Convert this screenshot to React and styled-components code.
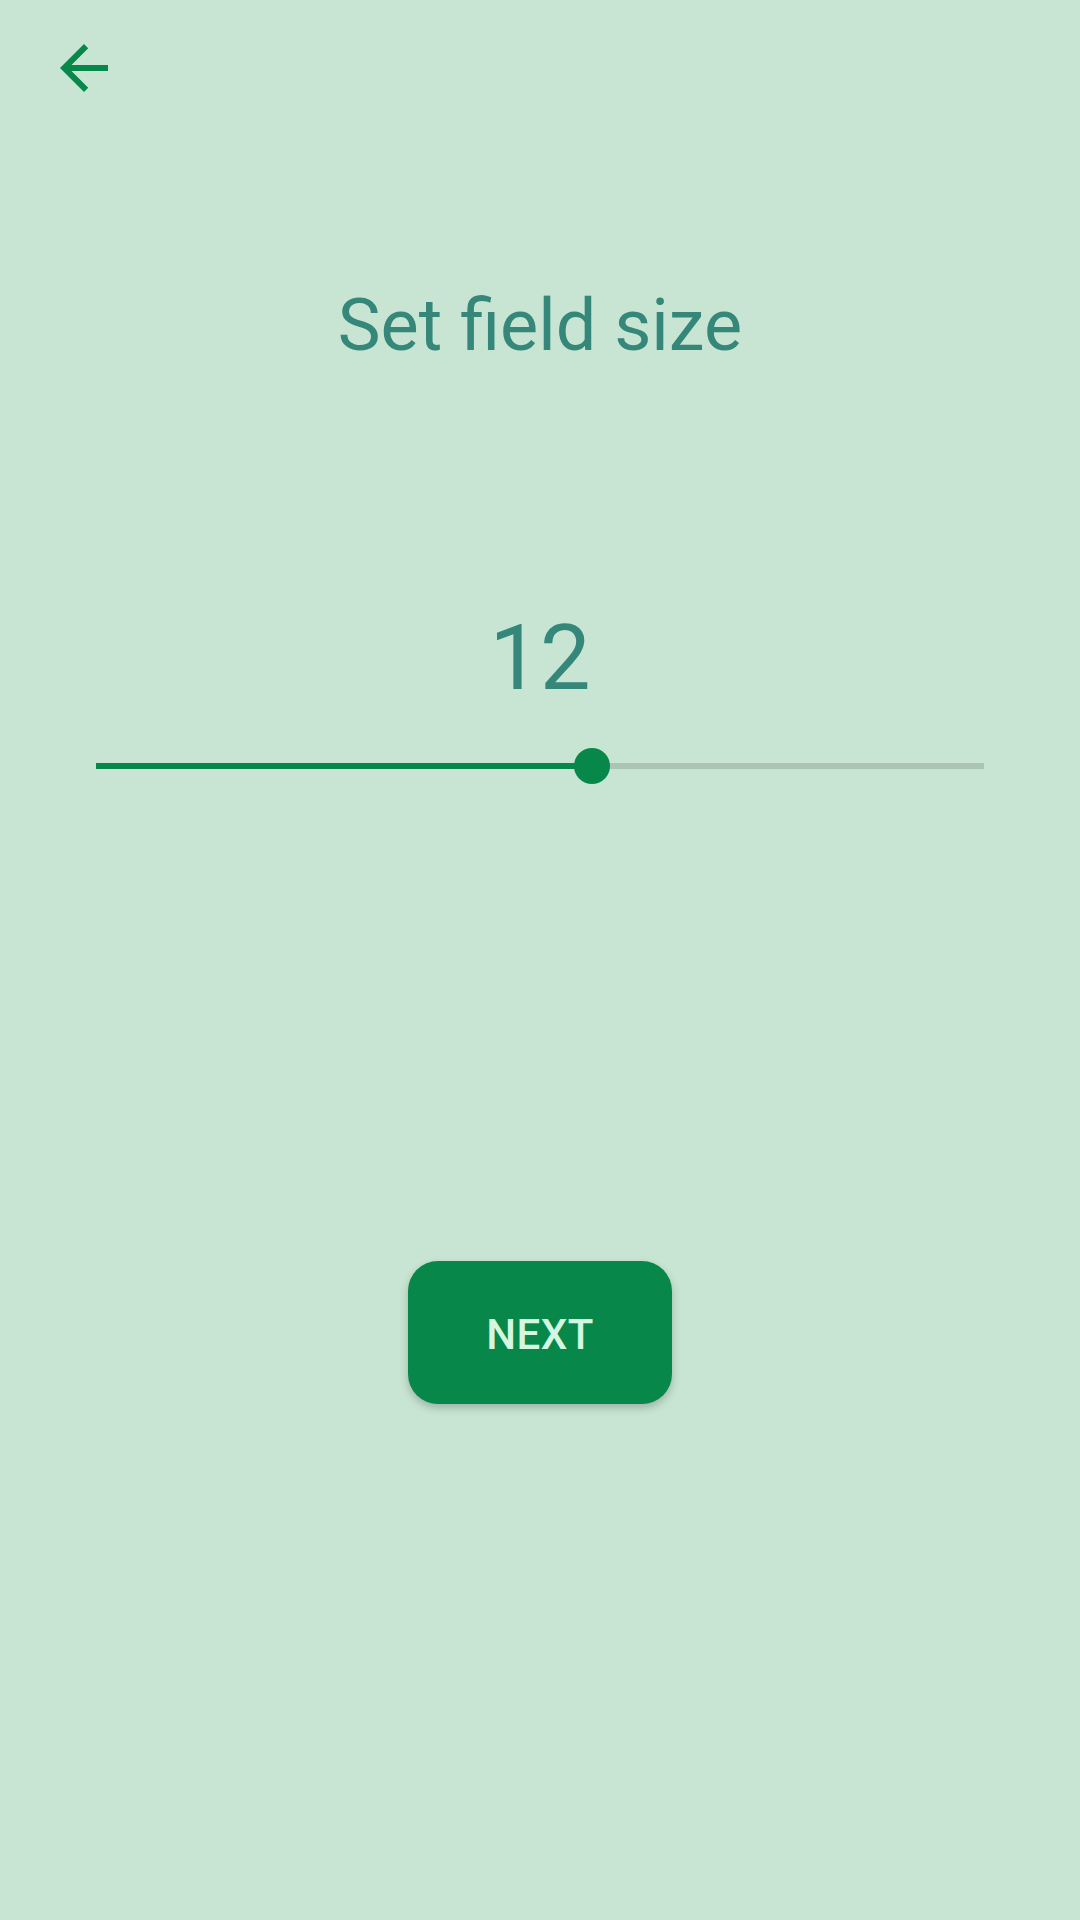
import React from 'react';
import styled, { createGlobalStyle } from 'styled-components';

const GlobalStyle = createGlobalStyle`
  html, body {
    margin: 0;
    padding: 0;
    background: #c8e5d3;
  }
  body {
    font-family: Roboto, "Noto Sans", "Liberation Sans", sans-serif;
  }
`;

const Page = styled.div`
  min-height: 1920px;
  display: flex;
  flex-direction: column;
  align-items: center;
  background: #c8e5d3;
`;

const Header = styled.div`
  align-self: stretch;
  display: flex;
  padding: 32px 0 0 48px;
`;

const BackButton = styled.button`
  width: 72px;
  height: 72px;
  padding: 0;
  border: none;
  background: transparent;
  display: flex;
  align-items: center;
  justify-content: center;
  cursor: pointer;
  color: #08874a;
`;

const Title = styled.h1`
  margin: 186px 0 0;
  font-size: 72px;
  line-height: 1;
  font-weight: 400;
  color: #35877a;
`;

const Value = styled.div`
  margin-top: 252px;
  font-size: 90px;
  line-height: 1;
  font-weight: 400;
  color: #35877a;
`;

const SliderWrap = styled.div`
  align-self: stretch;
  margin-top: 44px;
  padding: 0 96px;
  height: 36px;
  display: flex;
  align-items: center;
`;

const Track = styled.div`
  position: relative;
  flex: 1;
  height: 6px;
  background: #abc4b3;
`;

const Fill = styled.div`
  height: 100%;
  background: #08874a;
`;

const Thumb = styled.div`
  position: absolute;
  top: 50%;
  width: 36px;
  height: 36px;
  margin: -18px 0 0 -18px;
  border-radius: 50%;
  background: #08874a;
`;

const NextButton = styled.button`
  margin-top: 477px;
  width: 264px;
  height: 143px;
  padding: 4px 0 0;
  border: none;
  border-radius: 30px;
  background: #08874a;
  color: #d5f7e2;
  font-family: Roboto, "Noto Sans", sans-serif;
  font-size: 42px;
  font-weight: 500;
  letter-spacing: 0.5px;
  box-shadow: 0 4px 8px rgba(0, 0, 0, 0.22);
  cursor: pointer;
`;

const ArrowBack = () => (
  <svg width="72" height="72" viewBox="0 0 24 24" fill="currentColor">
    <path d="M20 11H7.83l5.59-5.59L12 4l-8 8 8 8 1.41-1.41L7.83 13H20v-2z" />
  </svg>
);

const MIN = 3;
const MAX = 19.1;

export default function App() {
  const value = 12;
  const pct = ((value - MIN) / (MAX - MIN)) * 100;

  return (
    <Page>
      <GlobalStyle />
      <Header>
        <BackButton aria-label="Back">
          <ArrowBack />
        </BackButton>
      </Header>
      <Title>Set field size</Title>
      <Value>{value}</Value>
      <SliderWrap>
        <Track>
          <Fill style={{ width: `${pct}%` }} />
          <Thumb style={{ left: `${pct}%` }} />
        </Track>
      </SliderWrap>
      <NextButton>NEXT</NextButton>
    </Page>
  );
}
